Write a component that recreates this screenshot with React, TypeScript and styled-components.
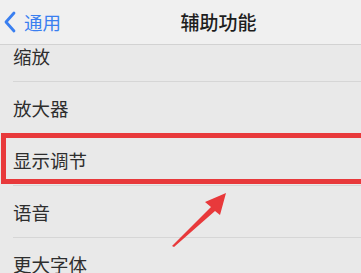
import React from "react";
import styled, { createGlobalStyle } from "styled-components";

const Global = createGlobalStyle`
  html, body { margin: 0; padding: 0; background: #e9e9e9; }
  body { font-family: "Noto Sans CJK SC", "Noto Sans", sans-serif; }
`;

const Screen = styled.div`
  position: relative;
  width: 361px;
  height: 273px;
  overflow: hidden;
  background: #e9e9e9;
`;

const NavBar = styled.div`
  position: relative;
  z-index: 2;
  height: 44px;
  background: #f0f0f0;
  border-bottom: 1px solid #d2d2d2;
  display: flex;
  align-items: center;
`;

const Back = styled.div`
  display: flex;
  align-items: center;
  gap: 4px;
  padding-left: 4px;
  color: #3a7ff0;
  font-size: 18.5px;
  line-height: 1;
  width: 100px;
`;

const Title = styled.div`
  flex: 1;
  text-align: center;
  font-size: 19px;
  font-weight: 500;
  color: #1e1e1e;
  padding-right: 28px;
  margin-top: -2px;
`;

const Viewport = styled.div`
  height: 228px;
  overflow: hidden;
`;

const List = styled.div`
  margin-top: -15px;
  display: flex;
  flex-direction: column;
`;

const Row = styled.div<{ $last?: boolean; $highlight?: boolean }>`
  position: relative;
  height: 52px;
  margin-left: 13px;
  display: flex;
  align-items: center;
  font-size: 18.5px;
  color: #2e2e2e;
  border-bottom: ${(p) => (p.$last ? "none" : "1px solid #d6d6d6")};
  box-sizing: border-box;

  ${(p) =>
    p.$highlight &&
    `
    &::after {
      content: "";
      position: absolute;
      top: -1px;
      bottom: 1px;
      left: -12px;
      right: -20px;
      border: 5px solid #e8393b;
      z-index: 1;
    }
  `}
`;

const Arrow = styled.svg`
  position: absolute;
  left: 0;
  top: 0;
  z-index: 3;
  pointer-events: none;
`;

export default function App() {
  const items = ["缩放", "放大器", "显示调节", "语音", "更大字体"];
  return (
    <>
      <Global />
      <Screen>
        <NavBar>
          <Back>
            <svg width="16" height="22" viewBox="0 0 16 22">
              <path
                d="M10 2 L2 11 L10 20"
                fill="none"
                stroke="#3a7ff0"
                strokeWidth="2.8"
                strokeLinecap="round"
                strokeLinejoin="round"
              />
            </svg>
            <span>通用</span>
          </Back>
          <Title>辅助功能</Title>
        </NavBar>
        <Viewport>
          <List>
            {items.map((t, i) => (
              <Row key={t} $highlight={i === 2} $last={i === items.length - 1}>
                {t}
              </Row>
            ))}
          </List>
        </Viewport>
        <Arrow width="361" height="273" viewBox="0 0 361 273">
          <path
            d="M226 193 L205 202 L211 207 L172 246 L174 247 L215 211 L220 215 Z"
            fill="#e8393b"
          />
        </Arrow>
      </Screen>
    </>
  );
}
